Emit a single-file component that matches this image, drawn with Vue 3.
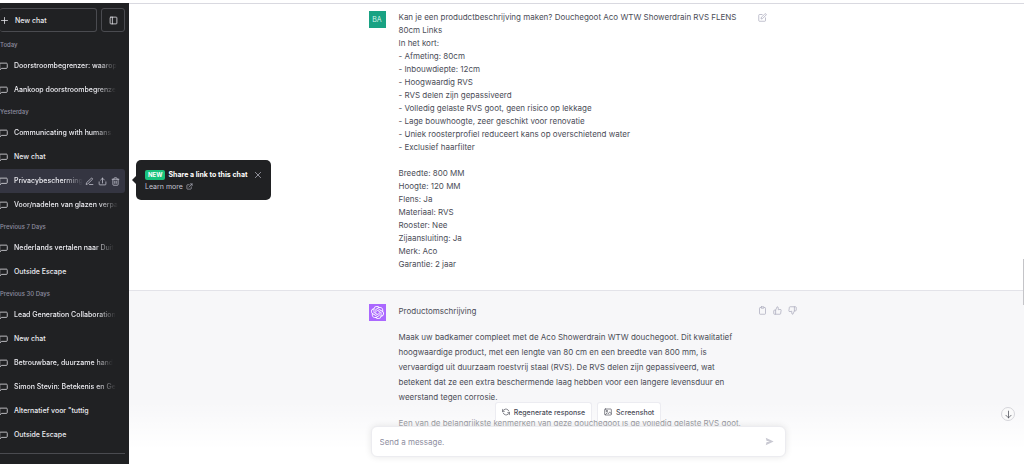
<script setup>
const groups = [
  { label: 'Today', items: ['Doorstroombegrenzer: waarop', 'Aankoop doorstroombegrenze'] },
  {
    label: 'Yesterday',
    items: ['Communicating with humans.', 'New chat', 'Privacybescherming', 'Voor/nadelen van glazen verpa'],
    active: 2,
  },
  { label: 'Previous 7 Days', items: ['Nederlands vertalen naar Duit', 'Outside Escape'] },
  {
    label: 'Previous 30 Days',
    items: [
      'Lead Generation Collaboration',
      'New chat',
      'Betrouwbare, duurzame hand',
      'Simon Stevin: Betekenis en Ge',
      'Alternatief voor "tuttig',
      'Outside Escape',
    ],
  },
]

const prompt = `Kan je een produdctbeschrijving maken? Douchegoot Aco WTW Showerdrain RVS FLENS
80cm Links
In het kort:
- Afmeting: 80cm
- Inbouwdiepte: 12cm
- Hoogwaardig RVS
- RVS delen zijn gepassiveerd
- Volledig gelaste RVS goot, geen risico op lekkage
- Lage bouwhoogte, zeer geschikt voor renovatie
- Uniek roosterprofiel reduceert kans op overschietend water
- Exclusief haarfilter

Breedte: 800 MM
Hoogte: 120 MM
Flens: Ja
Materiaal: RVS
Rooster: Nee
Zijaansluiting: Ja
Merk: Aco
Garantie: 2 jaar`

const answer = [
  'Productomschrijving',
  `Maak uw badkamer compleet met de Aco Showerdrain WTW douchegoot. Dit kwalitatief
hoogwaardige product, met een lengte van 80 cm en een breedte van 800 mm, is
vervaardigd uit duurzaam roestvrij staal (RVS). De RVS delen zijn gepassiveerd, wat
betekent dat ze een extra beschermende laag hebben voor een langere levensduur en
weerstand tegen corrosie.`,
  'Een van de belangrijkste kenmerken van deze douchegoot is de volledig gelaste RVS goot,',
]
</script>

<template>
  <div class="page">
    <aside class="sidebar">
      <div class="top">
        <button class="new">
          <svg class="icon" viewBox="0 0 24 24"><path d="M12 4v16M4 12h16" /></svg>
          New chat
        </button>
        <button class="toggle" aria-label="Hide sidebar">
          <svg class="icon" viewBox="0 0 24 24"><rect x="3" y="3" width="18" height="18" rx="2" /><path d="M9 3v18" /></svg>
        </button>
      </div>
      <nav class="history">
        <section v-for="g in groups" :key="g.label">
          <h2>{{ g.label }}</h2>
          <div v-for="(t, i) in g.items" :key="i" class="item" :class="{ active: g.active === i }">
            <a href="#">
              <svg class="icon" viewBox="0 0 24 24"><path d="M22 15a2 2 0 0 1-2 2H7l-5 4V5a2 2 0 0 1 2-2h16a2 2 0 0 1 2 2z" /></svg>
              <span :class="{ long: t.length > 24 || g.active === i }">{{ t }}</span>
            </a>
            <div v-if="g.active === i" class="tools">
              <button aria-label="Rename"><svg class="icon" viewBox="0 0 24 24"><path d="M12 20h9M16.500 3.500a2.100 2.100 0 0 1 3 3L7 19l-4 1 1-4z" /></svg></button>
              <button aria-label="Share"><svg class="icon" viewBox="0 0 24 24"><path d="M3 13v6a2 2 0 0 0 2 2h14a2 2 0 0 0 2-2v-6M12 16V3M7 8l5-5 5 5" /></svg></button>
              <button aria-label="Delete"><svg class="icon" viewBox="0 0 24 24"><path d="M3 6h18M19 6v14a2 2 0 0 1-2 2H7a2 2 0 0 1-2-2V6M8 6V4a2 2 0 0 1 2-2h4a2 2 0 0 1 2 2v2M10 11v6M14 11v6" /></svg></button>
            </div>
          </div>
        </section>
      </nav>
      <div class="account"></div>
    </aside>

    <main class="main">
      <article class="turn user">
        <div class="row">
          <div class="avatar">BA</div>
          <p class="prompt">{{ prompt }}</p>
          <div class="actions">
            <button aria-label="Edit message"><svg class="icon" viewBox="0 0 24 24"><path d="M11 4H4a2 2 0 0 0-2 2v14a2 2 0 0 0 2 2h14a2 2 0 0 0 2-2v-7" /><path d="M18.500 2.500a2.100 2.100 0 0 1 3 3L12 15l-4 1 1-4z" /></svg></button>
          </div>
        </div>
      </article>
      <article class="turn bot">
        <div class="row">
          <div class="avatar">
            <svg class="logo" viewBox="0 0 24 24">
              <path d="M22.2819 9.8211a5.9847 5.9847 0 0 0-.5157-4.9108 6.0462 6.0462 0 0 0-6.5098-2.9A6.0651 6.0651 0 0 0 4.9807 4.1818a5.9847 5.9847 0 0 0-3.9977 2.9 6.0462 6.0462 0 0 0 .7427 7.0966 5.98 5.98 0 0 0 .511 4.9107 6.051 6.051 0 0 0 6.5146 2.9001A5.9847 5.9847 0 0 0 13.2599 24a6.0557 6.0557 0 0 0 5.7718-4.2058 5.9894 5.9894 0 0 0 3.9977-2.9001 6.0557 6.0557 0 0 0-.7475-7.0729zm-9.022 12.6081a4.4755 4.4755 0 0 1-2.8764-1.0408l.1419-.0804 4.7783-2.7582a.7948.7948 0 0 0 .3927-.6813v-6.7369l2.02 1.1686a.071.071 0 0 1 .038.052v5.5826a4.504 4.504 0 0 1-4.4945 4.4944zm-9.6607-4.1254a4.4708 4.4708 0 0 1-.5346-3.0137l.142.0852 4.783 2.7582a.7712.7712 0 0 0 .7806 0l5.8428-3.3685v2.3324a.0804.0804 0 0 1-.0332.0615L9.74 19.9502a4.4992 4.4992 0 0 1-6.1408-1.6464zM2.3408 7.8956a4.485 4.485 0 0 1 2.3655-1.9728V11.6a.7664.7664 0 0 0 .3879.6765l5.8144 3.3543-2.0201 1.1685a.0757.0757 0 0 1-.071 0l-4.8303-2.7865A4.504 4.504 0 0 1 2.3408 7.872zm16.5963 3.8558L13.1038 8.364 15.1192 7.2a.0757.0757 0 0 1 .071 0l4.8303 2.7913a4.4944 4.4944 0 0 1-.6765 8.1042v-5.6772a.79.79 0 0 0-.407-.667zm2.0107-3.0231l-.142-.0852-4.7735-2.7818a.7759.7759 0 0 0-.7854 0L9.409 9.2297V6.8974a.0662.0662 0 0 1 .0284-.0615l4.8303-2.7866a4.4992 4.4992 0 0 1 6.6802 4.66zM8.3065 12.863l-2.02-1.1638a.0804.0804 0 0 1-.038-.0567V6.0742a4.4992 4.4992 0 0 1 7.3757-3.4537l-.142.0805L8.704 5.459a.7948.7948 0 0 0-.3927.6813zm1.0976-2.3654l2.602-1.4998 2.6069 1.4998v2.9994l-2.5974 1.4997-2.6067-1.4997Z" />
            </svg>
          </div>
          <div class="answer"><p v-for="p in answer" :key="p">{{ p }}</p></div>
          <div class="actions">
            <button aria-label="Copy"><svg class="icon" viewBox="0 0 24 24"><path d="M16 4h2a2 2 0 0 1 2 2v14a2 2 0 0 1-2 2H6a2 2 0 0 1-2-2V6a2 2 0 0 1 2-2h2" /><rect x="8" y="2" width="8" height="4" rx="1" /></svg></button>
            <button aria-label="Good response"><svg class="icon" viewBox="0 0 24 24"><path d="M14 9V5a3 3 0 0 0-3-3l-4 9v11h11.300a2 2 0 0 0 2-1.700l1.400-9a2 2 0 0 0-2-2.300zM7 22H4a2 2 0 0 1-2-2v-7a2 2 0 0 1 2-2h3" /></svg></button>
            <button aria-label="Bad response"><svg class="icon" viewBox="0 0 24 24"><path d="M10 15v4a3 3 0 0 0 3 3l4-9V2H5.700a2 2 0 0 0-2 1.700l-1.400 9a2 2 0 0 0 2 2.300zM17 2h2.700A2.300 2.300 0 0 1 22 4v7a2.300 2.300 0 0 1-2.300 2H17" /></svg></button>
          </div>
        </div>
      </article>

      <div class="footer">
        <div class="suggest">
          <button>
            <svg class="icon" viewBox="0 0 24 24"><path d="M1 4v6h6M23 20v-6h-6M20.500 9A9 9 0 0 0 5.600 5.600L1 10m22 4-4.600 4.400A9 9 0 0 1 3.500 15" /></svg>
            Regenerate response
          </button>
          <button>
            <svg class="icon" viewBox="0 0 24 24"><rect x="2" y="3" width="20" height="18" rx="2" /><circle cx="8" cy="9" r="2" /><path d="m4 20 6-6 3 3 4-5 5 5" /></svg>
            Screenshot
          </button>
        </div>
        <form class="composer" @submit.prevent>
          <input type="text" placeholder="Send a message." aria-label="Send a message." />
          <button aria-label="Send">
            <svg viewBox="0 0 24 24"><path d="M2 2 23 12 2 22 4 14 13 12 4 10z" /></svg>
          </button>
        </form>
      </div>
      <button class="down" aria-label="Scroll to bottom">
        <svg class="icon" viewBox="0 0 24 24"><path d="M12 3v18M5 14l7 7 7-7" /></svg>
      </button>
      <div class="thumb"></div>
    </main>

    <div class="tip" role="dialog" aria-label="Share a link to this chat">
      <div class="tip-head">
        <span class="badge">NEW</span>
        <strong>Share a link to this chat</strong>
        <button aria-label="Close"><svg class="icon" viewBox="0 0 24 24"><path d="M4 4l16 16M20 4 4 20" /></svg></button>
      </div>
      <a href="#">Learn more <svg class="icon" viewBox="0 0 24 24"><path d="M18 13v6a2 2 0 0 1-2 2H5a2 2 0 0 1-2-2V8a2 2 0 0 1 2-2h6M15 3h6v6M10 14 21 3" /></svg></a>
    </div>
  </div>
</template>

<style>
body {
  margin: 0;
}
</style>

<style scoped>
.page {
  position: relative;
  box-sizing: border-box;
  display: flex;
  height: 100vh;
  padding-top: 3px;
  overflow: hidden;
  background: #fff;
  font-family: Inter, "Liberation Sans", sans-serif;
  font-size: 8px;
  color: #4b4d57;
}
button {
  display: flex;
  align-items: center;
  padding: 0;
  border: 0;
  background: none;
  color: inherit;
  font: inherit;
}
a {
  color: inherit;
  text-decoration: none;
}
h2,
p {
  margin: 0;
}
.icon {
  flex: none;
  width: 9px;
  height: 9px;
  fill: none;
  stroke: currentColor;
  stroke-width: 2;
  stroke-linecap: round;
  stroke-linejoin: round;
}
.sidebar {
  display: flex;
  flex: none;
  flex-direction: column;
  box-sizing: border-box;
  width: 129px;
  padding: 5px 4px 0 0;
  background: #202123;
  color: #ececf1;
  font-size: 7px;
  font-weight: 500;
}
.top {
  display: flex;
  gap: 4px;
  margin-bottom: 3px;
}
.top button {
  box-sizing: border-box;
  height: 24px;
  border: 1px solid #4a4b50;
  border-radius: 3px;
}
.new {
  flex: 1;
  gap: 6px;
  border-left: 0 !important;
}
.toggle {
  justify-content: center;
  width: 24px;
}
.history {
  flex: 1;
}
h2 {
  height: 19px;
  font-size: 6px;
  font-weight: 500;
  line-height: 19px;
  color: #8e8ea0;
}
.item {
  display: flex;
  align-items: center;
  height: 24px;
  border-radius: 0 3px 3px 0;
}
.item a {
  display: flex;
  flex: 1;
  align-items: center;
  gap: 6px;
  min-width: 0;
}
.item a .icon {
  margin-left: -1px;
}
.item span {
  line-height: 12px;
  white-space: nowrap;
}
.item .long {
  mask-image: linear-gradient(to left, transparent, #000 20px);
}
.active {
  background: #343541;
}
.tools {
  display: flex;
  gap: 4px;
  padding-right: 5px;
  color: #c5c5d2;
}
.account {
  height: 10px;
  border-top: 1px solid #4a4b50;
}
.main {
  position: relative;
  flex: 1;
  min-width: 0;
  overflow: hidden;
  border-top: 1px solid #d9d9e0;
}
.turn {
  display: flex;
  justify-content: center;
  padding: 7px 0 19px 13px;
}
.row {
  display: grid;
  grid-template-columns: 17px 346px 40px;
  column-gap: 13px;
}
.avatar {
  display: flex;
  align-items: center;
  justify-content: center;
  width: 17px;
  height: 17px;
  background: #19a283;
  color: #d5f2ea;
  font-size: 7px;
}
.prompt,
.answer {
  white-space: pre;
  line-height: 13px;
}
.answer {
  display: flex;
  flex-direction: column;
  gap: 11px;
  line-height: 15px;
}
.bot {
  padding-top: 13px;
  padding-bottom: 60px;
  border-top: 1px solid #e3e3e9;
  background: #f7f7f9;
}
.bot .avatar {
  background: #ab68ff;
}
.logo {
  width: 13px;
  height: 13px;
  fill: #fff;
}
.actions {
  display: flex;
  gap: 6px;
  align-items: flex-start;
  padding-top: 2px;
  color: #acacbe;
}
.footer {
  position: absolute;
  right: 0;
  bottom: 0;
  left: 0;
  display: flex;
  flex-direction: column;
  align-items: center;
  gap: 5px;
  padding: 0 0 7px 3px;
  background: linear-gradient(rgba(255, 255, 255, 0), #fff 75%);
}
.suggest {
  display: flex;
  gap: 5px;
}
.suggest button {
  gap: 4px;
  height: 19px;
  padding: 0 6px;
  border: 1px solid #ececf1;
  border-bottom: 0;
  border-radius: 3px 3px 0 0;
  background: #fff;
  font-size: 7px;
  font-weight: 500;
}
.suggest .icon {
  width: 8px;
  height: 8px;
}
.composer {
  display: flex;
  align-items: center;
  box-sizing: border-box;
  width: 415px;
  max-width: 100%;
  height: 31px;
  padding: 0 11px 0 8px;
  border: 1px solid #ececf0;
  border-radius: 6px;
  background: #fff;
  box-shadow: 0 0 7px rgba(0, 0, 0, 0.1);
}
.composer input {
  flex: 1;
  min-width: 0;
  padding: 0;
  border: 0;
  outline: 0;
  background: none;
  font: inherit;
}
.composer input::placeholder {
  color: #8e8ea0;
}
.composer svg {
  width: 9px;
  height: 9px;
  fill: #c9c9d2;
}
.down {
  position: absolute;
  right: 9px;
  bottom: 43px;
  box-sizing: border-box;
  justify-content: center;
  width: 14px;
  height: 14px;
  border: 1px solid #d5d5da;
  border-radius: 50%;
  background: #fafafa;
}
.thumb {
  position: absolute;
  top: 255px;
  right: 0;
  width: 1px;
  height: 46px;
  background: #c4c4c8;
}
.tip {
  position: absolute;
  top: 160px;
  left: 136px;
  box-sizing: border-box;
  width: 135px;
  height: 40px;
  padding: 9px 9px 0;
  border-radius: 5px;
  background: #202123;
  color: #c5c5d2;
  font-size: 7px;
}
.tip::before {
  content: "";
  position: absolute;
  top: 16px;
  left: -4px;
  border: 4px solid transparent;
  border-right-color: #202123;
  border-left: 0;
}
.tip-head {
  display: flex;
  align-items: center;
  gap: 3px;
  height: 11px;
}
.tip-head button {
  margin-left: auto;
}
.tip-head .icon {
  width: 8px;
  height: 8px;
}
.badge {
  padding: 0 3px;
  border-radius: 2px;
  background: #19c37d;
  color: #fff;
  font-size: 6px;
  font-weight: 700;
  line-height: 10px;
}
strong {
  font-weight: 700;
  color: #fff;
  white-space: nowrap;
}
.tip a {
  display: flex;
  align-items: center;
  gap: 3px;
  height: 13px;
}
.tip a .icon {
  width: 7px;
  height: 7px;
}
</style>
